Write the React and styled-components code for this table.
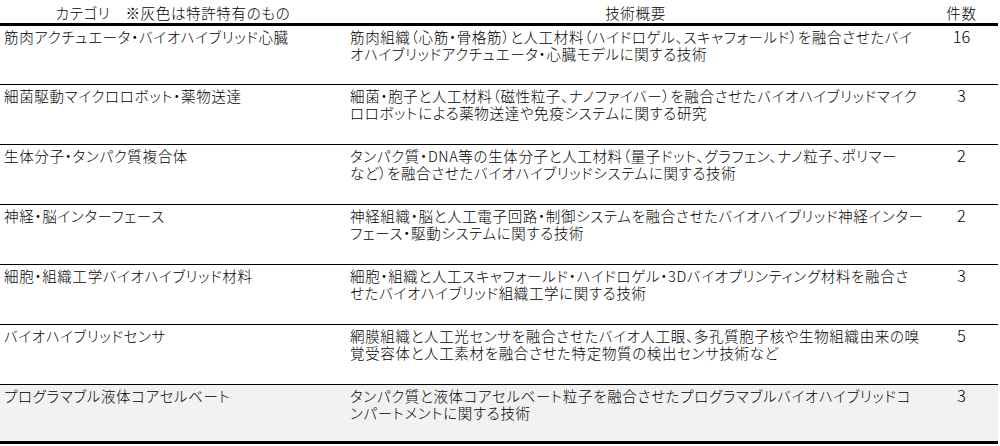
import React from 'react'
import styled, { createGlobalStyle } from 'styled-components'

const GlobalStyle = createGlobalStyle`
  html, body {
    margin: 0;
    padding: 0;
    background: #ffffff;
  }
  body {
    font-family: "Noto Sans CJK JP", "Noto Sans", sans-serif;
    color: #000;
  }
`;

const Table = styled.div`
  width: 998px;
  display: grid;
  grid-template-columns: 346px 579px 73px;
  font-size: 14.5px;
  font-weight: 300;
  line-height: 17px;
  letter-spacing: 0.65px;
  font-feature-settings: "palt";
  border-bottom: 3px solid #000;
`;

const HeadCell = styled.div`
  height: 26px;
  display: flex;
  align-items: center;
  justify-content: center;
  padding-top: 1px;
  box-sizing: border-box;
  border-bottom: 3px solid #000;
  white-space: pre;
`;

const Cell = styled.div`
  box-sizing: border-box;
  padding: ${p => (p.$first ? 2 : 2)}px 0 0 ${p => (p.$pad ? p.$pad : 0)}px;
  background: ${p => (p.$shade ? '#f2f2f2' : 'transparent')};
  border-top: ${p => (p.$first ? 'none' : '1px solid #000')};
  height: ${p => (p.$last ? '57px' : p.$first ? '58px' : '60px')};
  text-align: ${p => (p.$center ? 'center' : 'left')};
`;

const Count = styled.div`
  font-size: 16.5px;
  line-height: 17px;
  letter-spacing: 0;
`;

const Line = styled.div`
  white-space: nowrap;
`;

const rows = [
  {
    cat: '筋肉アクチュエータ・バイオハイブリッド心臓',
    desc: ['筋肉組織（心筋・骨格筋）と人工材料（ハイドロゲル、スキャフォールド）を融合させたバイ', 'オハイブリッドアクチュエータ・心臓モデルに関する技術'],
    count: 16,
  },
  {
    cat: '細菌駆動マイクロロボット・薬物送達',
    desc: ['細菌・胞子と人工材料（磁性粒子、ナノファイバー）を融合させたバイオハイブリッドマイク', 'ロロボットによる薬物送達や免疫システムに関する研究'],
    count: 3,
  },
  {
    cat: '生体分子・タンパク質複合体',
    desc: ['タンパク質・DNA等の生体分子と人工材料（量子ドット、グラフェン、ナノ粒子、ポリマー', 'など）を融合させたバイオハイブリッドシステムに関する技術'],
    count: 2,
  },
  {
    cat: '神経・脳インターフェース',
    desc: ['神経組織・脳と人工電子回路・制御システムを融合させたバイオハイブリッド神経インター', 'フェース・駆動システムに関する技術'],
    count: 2,
  },
  {
    cat: '細胞・組織工学バイオハイブリッド材料',
    desc: ['細胞・組織と人工スキャフォールド・ハイドロゲル・3Dバイオプリンティング材料を融合さ', 'せたバイオハイブリッド組織工学に関する技術'],
    count: 3,
  },
  {
    cat: 'バイオハイブリッドセンサ',
    desc: ['網膜組織と人工光センサを融合させたバイオ人工眼、多孔質胞子核や生物組織由来の嗅', '覚受容体と人工素材を融合させた特定物質の検出センサ技術など'],
    count: 5,
  },
  {
    cat: 'プログラマブル液体コアセルベート',
    desc: ['タンパク質と液体コアセルベート粒子を融合させたプログラマブルバイオハイブリッドコ', 'ンパートメントに関する技術'],
    count: 3,
    shade: true,
  },
];

const App = () => {
  return (
    <>
      <GlobalStyle />
      <Table>
        <HeadCell>{'カテゴリ　※灰色は特許特有のもの'}</HeadCell>
        <HeadCell>技術概要</HeadCell>
        <HeadCell>件数</HeadCell>
        {rows.map((r, i) => {
          const first = i === 0;
          const last = i === rows.length - 1;
          return (
            <React.Fragment key={i}>
              <Cell $pad={4} $first={first} $last={last} $shade={r.shade}>
                <Line>{r.cat}</Line>
              </Cell>
              <Cell $pad={4} $first={first} $last={last} $shade={r.shade}>
                {r.desc.map((d, j) => (
                  <Line key={j}>{d}</Line>
                ))}
              </Cell>
              <Cell $center $first={first} $last={last} $shade={r.shade}>
                <Count>{r.count}</Count>
              </Cell>
            </React.Fragment>
          );
        })}
      </Table>
    </>
  )
}

export default App
